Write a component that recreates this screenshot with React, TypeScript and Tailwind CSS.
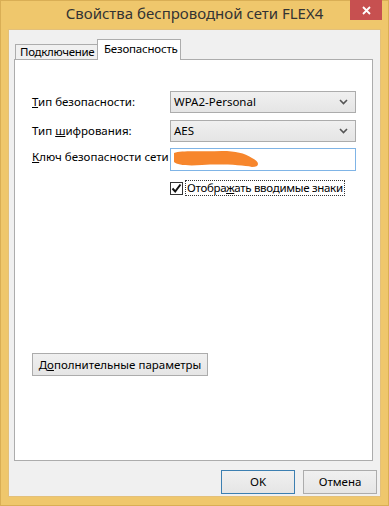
import React from "react";

const font = { fontFamily: '"Noto Sans", "Segoe UI", sans-serif' };

function Chevron() {
  return (
    <svg width="9" height="6" viewBox="0 0 9 6" className="text-[#555]">
      <path d="M1 1 L4.5 4.5 L8 1" fill="none" stroke="currentColor" strokeWidth="1.6" />
    </svg>
  );
}

function Select({ value }: { value: string }) {
  return (
    <div className="w-[186px] h-[22px] flex items-center justify-between pl-[3px] pr-[7px] border border-[#acacac] bg-gradient-to-b from-[#f0f0f0] to-[#e5e5e5] text-black">
      <span>{value}</span>
      <Chevron />
    </div>
  );
}

export default function App() {
  return (
    <div
      className="w-[389px] h-[506px] flex flex-col bg-[#efc76c] border border-[#d9ae55] text-[11.5px] text-black whitespace-nowrap"
      style={font}
    >
      <div className="relative h-[28px] flex items-center justify-center">
        <span className="text-[15px] text-[#333333] -mt-[3px]">
          Свойства беспроводной сети FLEX4
        </span>
        <div className="absolute right-[6px] top-[-1px] w-[32px] h-[20px] bg-[#c75050] flex items-center justify-center">
          <svg width="9" height="9" viewBox="0 0 9 9">
            <path d="M1 1 L8 8 M8 1 L1 8" stroke="white" strokeWidth="1.8" />
          </svg>
        </div>
      </div>

      <div className="flex-1 mx-[7px] mb-[8px] bg-[#f0f0f0] border border-[#e3c07a] flex flex-col px-[5px] pt-[8px]">
        <div className="flex items-end h-[21px]">
          <div className="h-[15px] w-[82px] ml-[1px] border border-b-0 border-r-0 border-[#acacac] bg-[#f0f0f0] flex items-center pl-[4px] leading-none tracking-[-0.3px]">
            Подключение
          </div>
          <div className="relative z-10 h-[21px] -mb-px w-[84px] border border-b-0 border-[#acacac] bg-white flex items-start pt-[2px] pl-[6px] leading-[14px] tracking-[-0.2px]">
            Безопасность
          </div>
        </div>

        <div className="h-[402px] w-[359px] border border-[#acacac] bg-white flex flex-col pl-[17px] pt-[31px]">
          <div className="grid grid-cols-[138px_186px] gap-y-[7px] items-center">
            <span>
              <span className="underline">Т</span>ип безопасности:
            </span>
            <Select value="WPA2-Personal" />
            <span>
              Тип <span className="underline">ш</span>ифрования:
            </span>
            <Select value="AES" />
            <span className="-mt-[6px]">
              <span className="underline">К</span>люч безопасности сети
            </span>
            <div className="relative h-[23px] -mt-[1px] border border-[#7fb4e6] bg-white">
              <svg className="absolute left-[1px] top-[0px]" width="90" height="20" viewBox="0 0 90 20">
                <path
                  d="M2 4 C 10 1, 30 3, 50 2 C 64 2, 72 4, 80 9 C 88 13, 88 18, 80 18 C 70 16, 50 15, 30 16 C 15 17, 5 16, 2 13 Z"
                  fill="#f7862c"
                />
              </svg>
            </div>
          </div>

          <div className="flex items-center mt-[9px] ml-[138px]">
            <div className="w-[13px] h-[13px] border border-[#333] bg-white flex items-center justify-center">
              <svg width="11" height="11" viewBox="0 0 11 11">
                <path d="M1.5 5.5 L4.2 8.5 L9.5 1.5" fill="none" stroke="#111" strokeWidth="2" />
              </svg>
            </div>
            <span className="ml-[2px] px-[1px] border border-dotted border-[#333] leading-[14px] tracking-[-0.3px]">
              Отобра<span className="underline">ж</span>ать вводимые знаки
            </span>
          </div>

          <div className="mt-[157px] w-[176px] h-[23px] border border-[#acacac] bg-gradient-to-b from-[#f0f0f0] to-[#e5e5e5] flex items-center justify-center">
            Д<span className="underline">о</span>полнительные параметры
          </div>
        </div>

        <div className="flex justify-end gap-[8px] mt-[9px] mr-[-2px]">
          <div className="w-[74px] h-[24px] border border-[#3c7fb1] bg-gradient-to-b from-[#f0f0f0] to-[#e5e5e5] flex items-center justify-center">
            OK
          </div>
          <div className="w-[74px] h-[24px] border border-[#acacac] bg-gradient-to-b from-[#f0f0f0] to-[#e5e5e5] flex items-center justify-center">
            Отмена
          </div>
        </div>
      </div>
    </div>
  );
}
